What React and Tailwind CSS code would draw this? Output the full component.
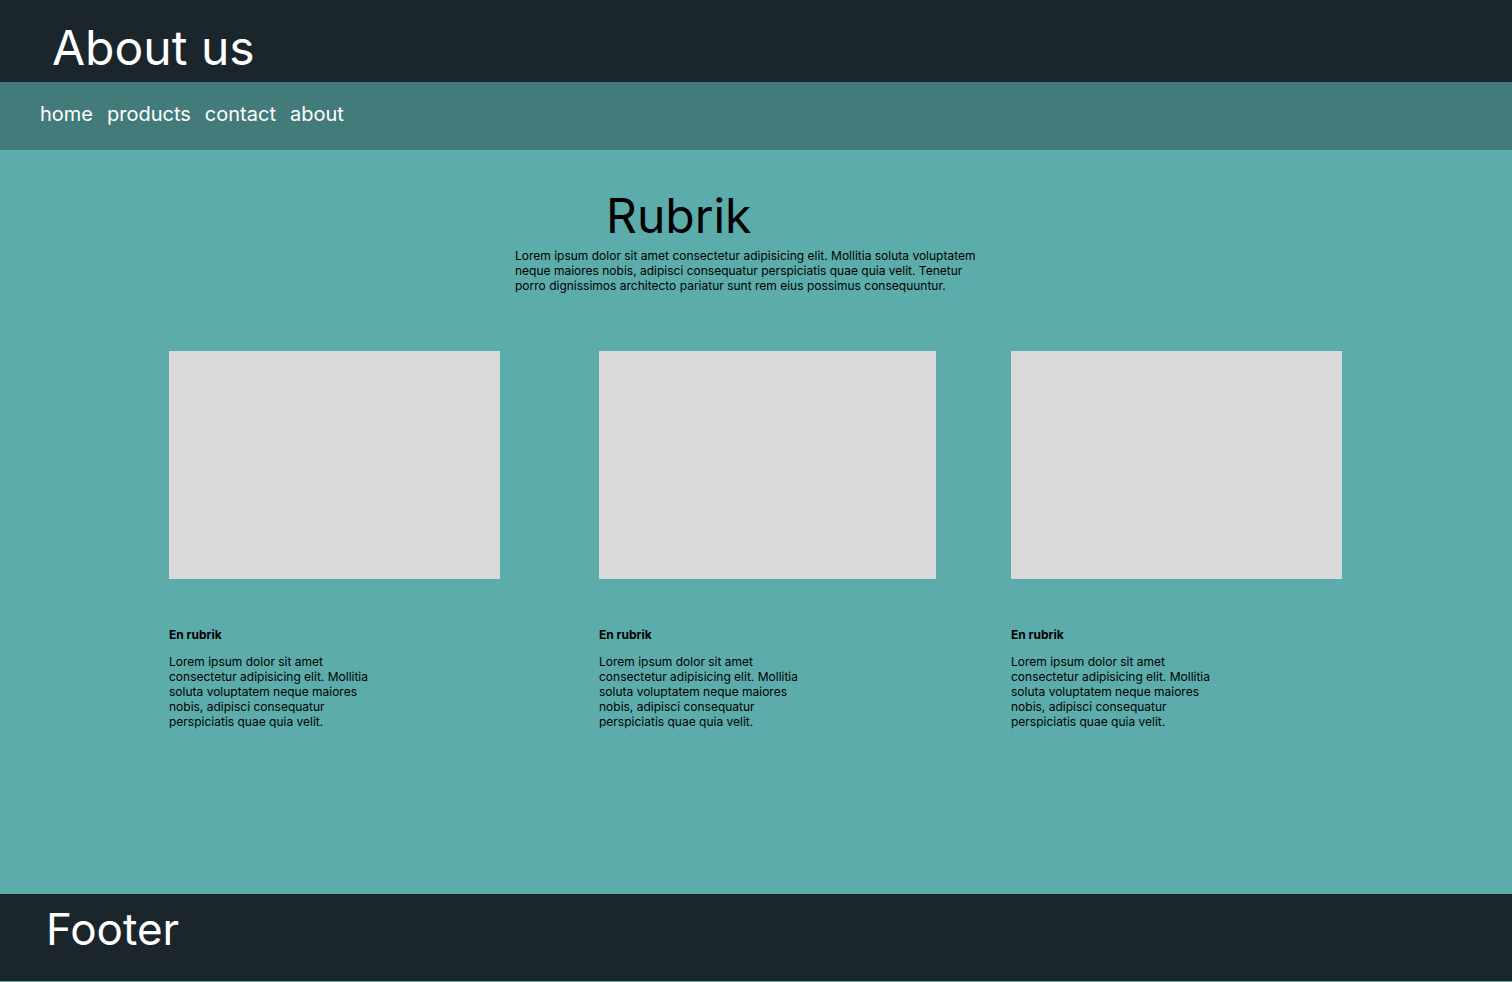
export default function App() {
  const cards = [
    { w: 'w-[331px]' },
    { w: 'w-[337px]' },
    { w: 'w-[331px]' },
  ];

  return (
    <div className="flex min-h-[982px] flex-col bg-[#5bacaa] font-['Inter',sans-serif]">
      <header className="flex h-[82px] items-center bg-[#1b252c] pl-[52px] pt-[14px]">
        <h1 className="text-[48px] leading-none text-white">About us</h1>
      </header>
      <nav className="flex h-[68px] items-center gap-[14px] bg-[#437b7a] pb-[4px] pl-[40px]">
        <a className="text-[20px] text-white">home</a>
        <a className="text-[20px] text-white">products</a>
        <a className="text-[20px] text-white">contact</a>
        <a className="text-[20px] text-white">about</a>
      </nav>
      <main className="flex-1">
        <section className="pt-[38px]">
          <h2 className="pl-[606px] text-[48px] leading-[56px] text-black">Rubrik</h2>
          <p className="ml-[515px] mt-[4px] w-[470px] text-[12px] leading-[15px] text-black">
            Lorem ipsum dolor sit amet consectetur adipisicing elit. Mollitia soluta voluptatem neque maiores nobis, adipisci consequatur perspiciatis quae quia velit. Tenetur porro dignissimos architecto pariatur sunt rem eius possimus consequuntur.
          </p>
        </section>
        <section className="mt-[58px] flex pl-[169px]">
          {cards.map((c, i) => (
            <div
              key={i}
              className={`${c.w} ${i === 0 ? 'mr-[99px]' : i === 1 ? 'mr-[75px]' : ''}`}
            >
              <div className="h-[228px] bg-[#d9d9d9]" />
              <h3 className="mt-[48px] text-[12px] font-bold leading-[15px] text-black">En rubrik</h3>
              <p className="mt-[12px] w-[205px] text-[12px] leading-[15px] text-black">
                Lorem ipsum dolor sit amet consectetur adipisicing elit. Mollitia soluta voluptatem neque maiores nobis, adipisci consequatur perspiciatis quae quia velit.
              </p>
            </div>
          ))}
        </section>
      </main>
      <footer className="mb-px flex h-[87px] items-center bg-[#1b252c] pb-[18px] pl-[46px]">
        <span className="text-[44px] leading-none text-white">Footer</span>
      </footer>
    </div>
  );
}
